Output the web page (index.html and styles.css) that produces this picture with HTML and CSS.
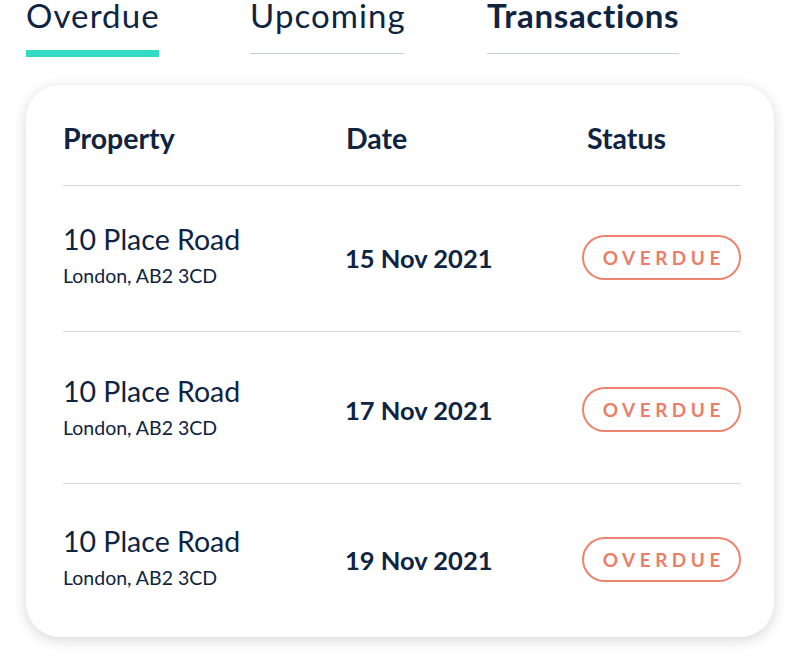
FILE: index.html
```html
<!DOCTYPE html>
<html lang="en">
<head>
<meta charset="utf-8">
<title>Overdue</title>
<link rel="stylesheet" href="styles.css">
</head>
<body>
<nav class="tabs">
  <div class="tab tab--overdue tab--active">Overdue</div>
  <div class="tab tab--upcoming">Upcoming</div>
  <div class="tab tab--transactions tab--bold">Transactions</div>
</nav>
<section class="card">
  <div class="row row--head">
    <div class="col-prop">Property</div>
    <div class="col-date">Date</div>
    <div class="col-status">Status</div>
  </div>
  <div class="row row--1">
    <div class="col-prop">
      <div class="addr">10 Place Road</div>
      <div class="city">London, AB2 3CD</div>
    </div>
    <div class="col-date date">15 Nov 2021</div>
    <div class="col-status"><span class="badge">OVERDUE</span></div>
  </div>
  <div class="row row--2">
    <div class="col-prop">
      <div class="addr">10 Place Road</div>
      <div class="city">London, AB2 3CD</div>
    </div>
    <div class="col-date date">17 Nov 2021</div>
    <div class="col-status"><span class="badge">OVERDUE</span></div>
  </div>
  <div class="row row--3">
    <div class="col-prop">
      <div class="addr">10 Place Road</div>
      <div class="city">London, AB2 3CD</div>
    </div>
    <div class="col-date date">19 Nov 2021</div>
    <div class="col-status"><span class="badge">OVERDUE</span></div>
  </div>
</section>
</body>
</html>
```
FILE: styles.css
```css
* { box-sizing: border-box; }
html, body {
  margin: 0;
  padding: 0;
  background: #ffffff;
}
body {
  font-family: "Lato", "Noto Sans", sans-serif;
  color: #0e2441;
  width: 800px;
  height: 666px;
  overflow: hidden;
}
.tabs {
  display: flex;
  align-items: flex-start;
  padding-left: 26px;
}
.tab {
  font-size: 33px;
  font-weight: 400;
  line-height: 30px;
  height: 54px;
  border-bottom: 1px solid #c9ced8;
  white-space: nowrap;
  letter-spacing: 1.1px;
}
.tab--overdue { width: 133px; margin-right: 91px; }
.tab--upcoming { width: 154px; margin-right: 83px; }
.tab--transactions { width: 192px; letter-spacing: 0.7px; }
.tab--bold { font-weight: 700; }
.tab--active {
  border-bottom: 7px solid #33dac6;
  height: 57px;
}
.card {
  margin: 28px 26px 0 26px;
  width: 748px;
  height: 552px;
  border-radius: 34px;
  background: #fff;
  box-shadow: 0 3px 14px rgba(0, 0, 0, 0.16);
  padding: 0 33px 0 37px;
}
.row {
  display: grid;
  grid-template-columns: 283px 236px 159px;
  align-items: center;
  border-bottom: 1px solid #d6d9df;
}
.row--head {
  height: 101px;
  padding-top: 6px;
  font-size: 28.5px;
  font-weight: 700;
}
.row--head .col-status { padding-left: 5px; }
.row--1 { height: 146px; padding-bottom: 2px; }
.row--2 { height: 152px; padding-top: 4px; }
.row--3 { height: 153px; padding-bottom: 2px; border-bottom: none; }
.row .col-prop { padding-bottom: 5px; }
.row--head .col-prop { padding-bottom: 0; }
.addr {
  font-size: 28.5px;
  font-weight: 400;
  line-height: 1.2;
}
.city {
  font-size: 19.5px;
  margin-top: 8px;
  line-height: 1.2;
}
.date {
  font-size: 25.5px;
  font-weight: 700;
  margin-left: -1px;
}
.badge {
  display: flex;
  align-items: center;
  justify-content: center;
  width: 159px;
  height: 45px;
  border: 2px solid #ee8470;
  border-radius: 23px;
  color: #ec7d68;
  font-size: 19px;
  font-weight: 700;
  letter-spacing: 4.5px;
  padding-left: 4.5px;
}
```
